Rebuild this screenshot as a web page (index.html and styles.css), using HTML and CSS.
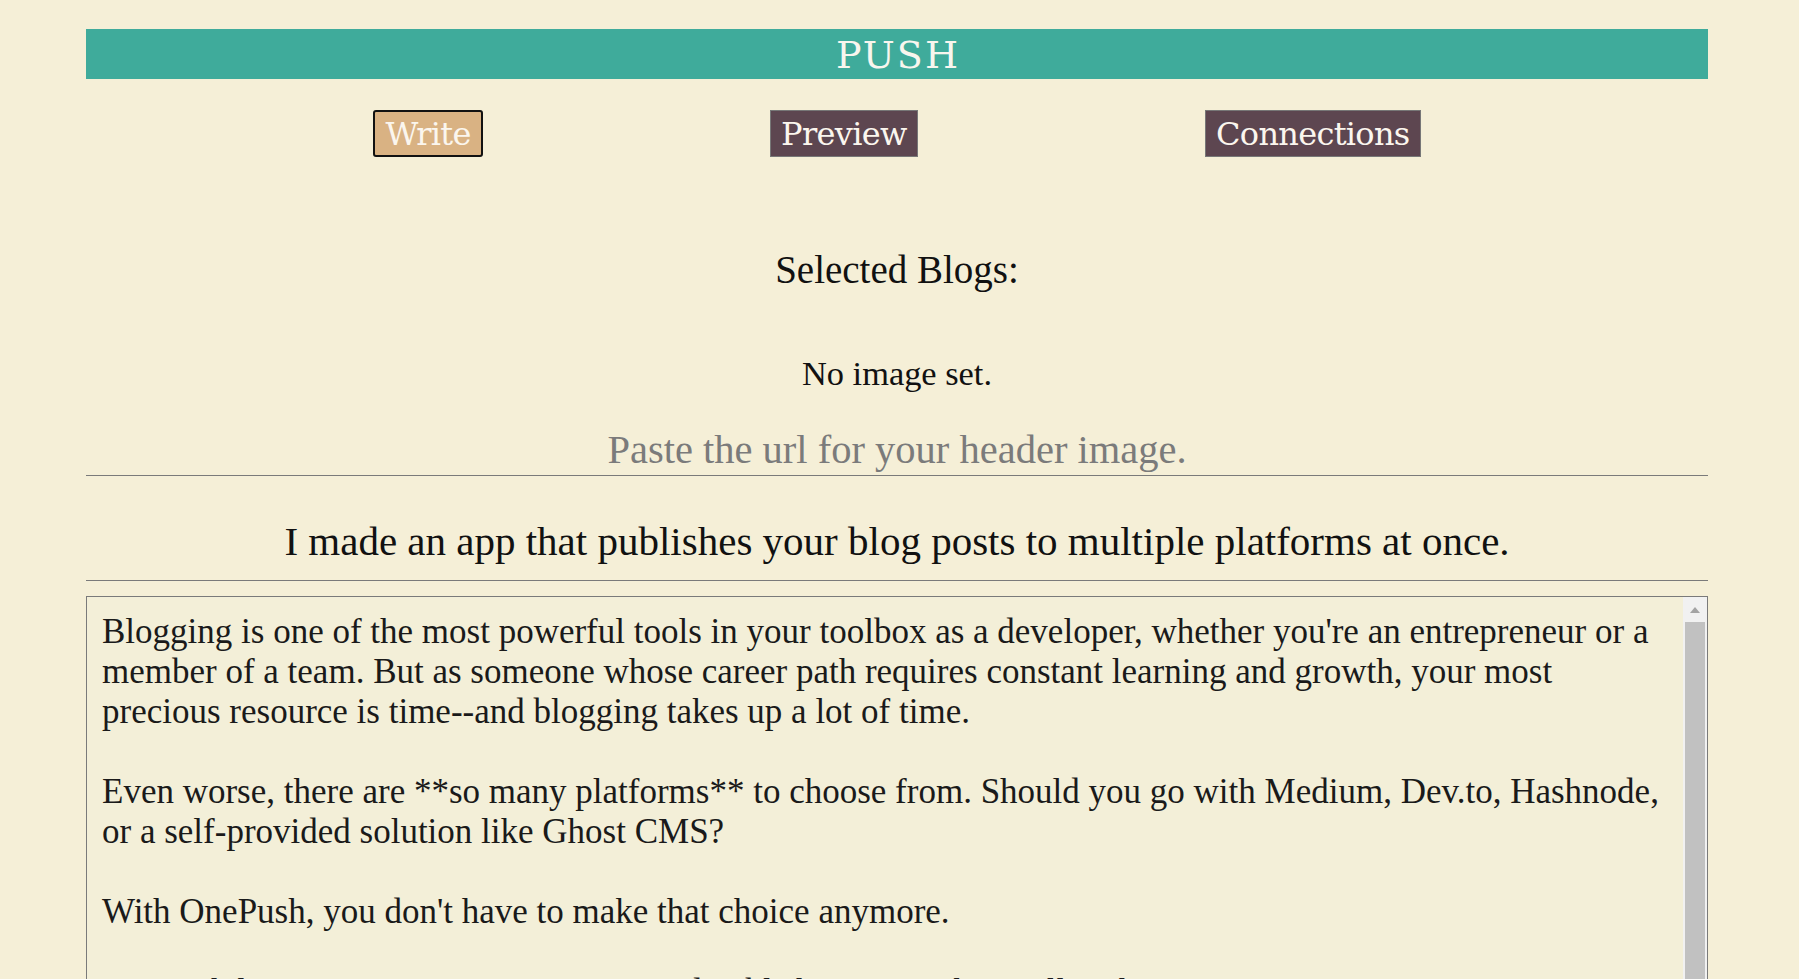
FILE: index.html
```html
<!DOCTYPE html>
<html lang="en">
<head>
<meta charset="utf-8">
<title>PUSH</title>
<link rel="stylesheet" href="styles.css">
</head>
<body>
<div class="page">
  <h1 class="brand">PUSH</h1>
  <nav class="tabs">
    <button class="tab active">Write</button>
    <button class="tab">Preview</button>
    <button class="tab">Connections</button>
  </nav>
  <h2 class="selected">Selected Blogs:</h2>
  <p class="noimg">No image set.</p>
  <input class="header-url" type="text" placeholder="Paste the url for your header image." spellcheck="false">
  <input class="title" type="text" value="I made an app that publishes your blog posts to multiple platforms at once." spellcheck="false">
  <div class="editor">
    <textarea class="body" spellcheck="false">Blogging is one of the most powerful tools in your toolbox as a developer, whether you're an entrepreneur or a member of a team. But as someone whose career path requires constant learning and growth, your most precious resource is time--and blogging takes up a lot of time.

Even worse, there are **so many platforms** to choose from. Should you go with Medium, Dev.to, Hashnode, or a self-provided solution like Ghost CMS?

With OnePush, you don't have to make that choice anymore.

OnePush lets you write your post once and publish it everywhere, all at the same time.

## How it works

Connect your accounts, write your post in Markdown, and hit publish.</textarea>
    <div class="scrollbar" aria-hidden="true">
      <div class="scroll-up"><span class="arrow-up"></span></div>
      <div class="scroll-thumb"></div>
    </div>
  </div>
</div>
</body>
</html>
```
FILE: styles.css
```css
html {
  overflow: hidden;
}

body {
  margin: 0;
  background: #f5efd7;
  font-family: "Liberation Serif", serif;
  color: #111;
}

.page {
  width: 1622px;
  margin-left: 86px;
  padding-top: 29px;
}

.brand {
  margin: 0;
  height: 50px;
  box-sizing: border-box;
  padding: 2px 0 0 2px;
  background: #3fab9b;
  color: #f8f6ee;
  font: 400 38px/48px "DejaVu Serif", serif;
  letter-spacing: 2px;
  text-align: center;
}

.tabs {
  display: flex;
  justify-content: space-evenly;
  margin-top: 31px;
}

.tab {
  height: 47px;
  box-sizing: border-box;
  padding: 0 10px;
  font: 400 32px "DejaVu Serif", serif;
  letter-spacing: -0.7px;
  color: #fbf6ee;
  background: #5d4650;
  border: 1px solid #777;
  border-radius: 0;
}

.tab.active {
  background: #d9b283;
  border: 2px solid #111;
  border-radius: 3px;
  padding: 0 10px;
}

.selected {
  margin: 90px 0 0;
  font: 400 39px/46px "Liberation Serif", serif;
  text-align: center;
  color: #111;
}

.noimg {
  margin: 60px 0 0;
  font: 400 34.4px/40px "Liberation Serif", serif;
  text-align: center;
  color: #111;
}

.header-url,
.title {
  display: block;
  width: 100%;
  box-sizing: border-box;
  border: 0;
  border-bottom: 1px solid #7a7a7a;
  background: transparent;
  text-align: center;
  color: #111;
  outline: none;
  font-family: "Liberation Serif", serif;
}

.header-url {
  height: 53px;
  margin-top: 30px;
  padding: 0;
  font-size: 40.5px;
}

.header-url::placeholder {
  color: #7b7b7b;
}

.title {
  height: 76px;
  margin-top: 29px;
  padding: 10px 0 14px;
  font-size: 41px;
}

.editor {
  position: relative;
  margin-top: 15px;
}

.body {
  display: block;
  width: 100%;
  box-sizing: border-box;
  height: 440px;
  margin: 0;
  padding: 15px 39px 14px 15px;
  border: 1px solid #7a7a7a;
  background: #f3efd8;
  font: 400 35px/40px "Liberation Serif", serif;
  color: #1a1a1a;
  resize: none;
  overflow: hidden;
  outline: none;
}

.scrollbar {
  position: absolute;
  top: 1px;
  right: 1px;
  bottom: 1px;
  width: 24px;
  background: #f1f1f1;
  display: flex;
  flex-direction: column;
}

.scroll-up {
  height: 25px;
  display: flex;
  justify-content: center;
  align-items: center;
}

.arrow-up {
  width: 0;
  height: 0;
  border-left: 5.5px solid transparent;
  border-right: 5.5px solid transparent;
  border-bottom: 6px solid #a3a3a3;
}

.scroll-thumb {
  flex: 1;
  margin: 0 2px;
  background: #c1c1c1;
}
```
